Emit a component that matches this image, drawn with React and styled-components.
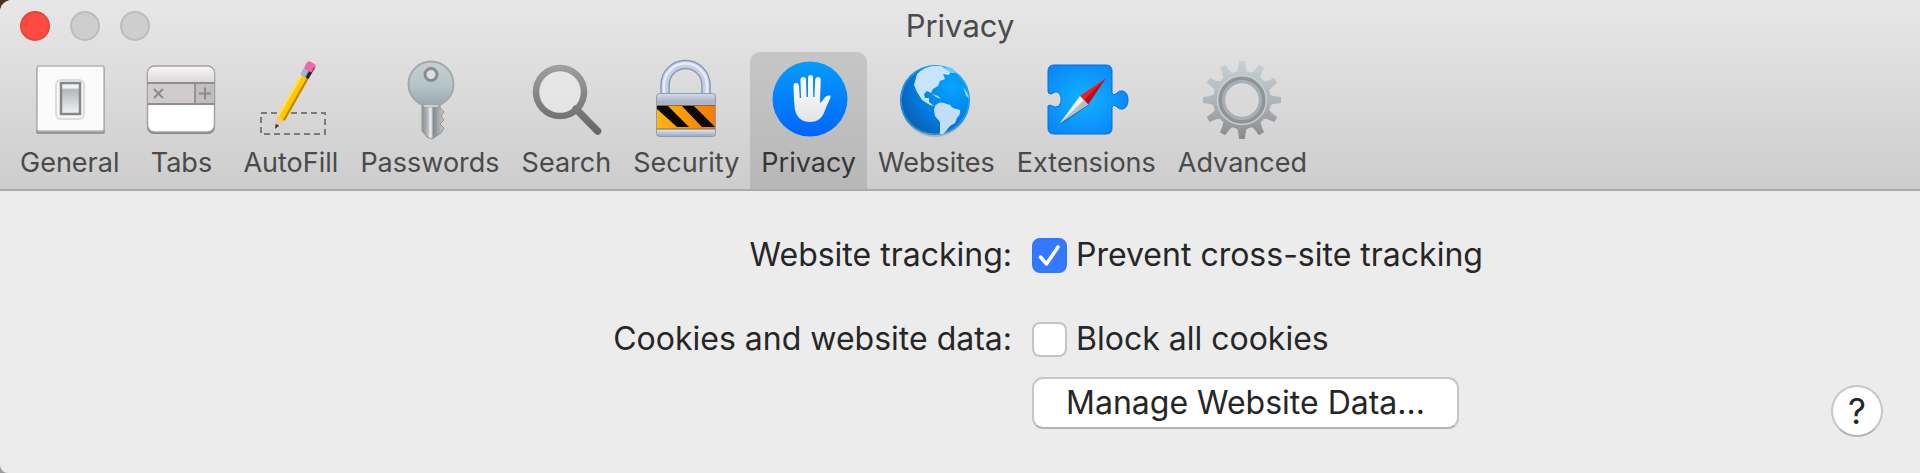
import React, { useState } from "react";
import styled, { createGlobalStyle } from "styled-components";

const GlobalStyle = createGlobalStyle`
  * {
    box-sizing: border-box;
  }
  body {
    margin: 0;
    background: linear-gradient(#4d3128, #9c9c9c);
    font-family: Inter, "Liberation Sans", sans-serif;
  }
`;

const Window = styled.main`
  min-height: 100vh;
  overflow: hidden;
  border-radius: 12px 0 0 8px;
  background-color: #ececec;
  color: #262626;
`;

const Header = styled.header`
  background: linear-gradient(#e7e7e7, #cdcdcd);
  border-bottom: 2px solid #ababab;
`;

const TitleBar = styled.div`
  display: grid;
  grid-template-columns: 1fr auto 1fr;
  align-items: center;
  height: 52px;
  padding: 0 20px;
`;

const TrafficLights = styled.div`
  display: flex;
  gap: 20px;
`;

const Light = styled.button`
  width: 30px;
  height: 30px;
  padding: 0;
  border-radius: 50%;
  border: 2px solid ${({ $active }) => ($active ? "#e9453c" : "#bcbcbc")};
  background-color: ${({ $active }) => ($active ? "#ff4a41" : "#cecece")};
`;

const Title = styled.h1`
  margin: 0;
  font-size: 31px;
  font-weight: 400;
  line-height: 36px;
  color: #4b4b4b;
`;

const Toolbar = styled.nav`
  display: flex;
  padding: 0 9px;
`;

const ToolButton = styled.button`
  display: flex;
  flex-direction: column;
  align-items: center;
  gap: 8px;
  min-width: 98px;
  padding: 8px 11px 11px;
  border: none;
  border-radius: 10px 10px 0 0;
  background: ${({ $active }) =>
    $active ? "linear-gradient(#c6c6c6, #b7b7b7)" : "transparent"};
  color: ${({ $active }) => ($active ? "#353535" : "#4a4a4a")};
  font-family: inherit;
  font-size: 27px;
  line-height: 30px;
`;

const Icon = styled.svg`
  width: 80px;
  height: 80px;
  overflow: visible;
`;

const Content = styled.div`
  display: flex;
  flex-direction: column;
  padding: 44px 37px 34px 0;
`;

const Form = styled.div`
  display: grid;
  grid-template-columns: 1012fr 851fr;
  column-gap: 20px;
  row-gap: 44px;
`;

const RowLabel = styled.div`
  text-align: right;
  font-size: 32px;
  line-height: 40px;
`;

const Field = styled.div`
  display: flex;
  flex-direction: column;
  align-items: flex-start;
  gap: 18px;
`;

const CheckLabel = styled.label`
  display: flex;
  align-items: center;
  gap: 9px;
  font-size: 32px;
  line-height: 40px;
`;

const CheckWrap = styled.span`
  display: grid;
  width: 35px;
  height: 35px;
  & > * {
    grid-area: 1 / 1;
  }
`;

const Checkbox = styled.input`
  appearance: none;
  width: 35px;
  height: 35px;
  margin: 0;
  border: 2px solid #c4c4c4;
  border-radius: 8px;
  background-color: #fff;
  &:checked {
    border-color: #2f78fb;
    background-color: #3478ff;
  }
`;

const CheckMark = styled.svg`
  width: 35px;
  height: 35px;
  pointer-events: none;
`;

const PushButton = styled.button`
  height: 52px;
  padding: 0 32px;
  border: 2px solid #c6c6c6;
  border-bottom-color: #b4b4b4;
  border-radius: 11px;
  background-color: #fff;
  color: #262626;
  font-family: inherit;
  font-size: 32px;
  line-height: 40px;
`;

const FooterRow = styled.div`
  display: flex;
  justify-content: space-between;
  align-items: flex-start;
  min-height: 60px;
`;

const HelpButton = styled.button`
  align-self: flex-end;
  width: 52px;
  height: 52px;
  padding: 0;
  border: 2px solid #c6c6c6;
  border-bottom-color: #b4b4b4;
  border-radius: 50%;
  background-color: #fff;
  color: #262626;
  font-family: inherit;
  font-size: 35px;
  line-height: 40px;
`;

const FieldWithHelp = styled(Field)`
  align-items: stretch;
`;

const GeneralIcon = () => (
  <Icon viewBox="0 0 80 80" aria-hidden="true">
    <defs>
      <linearGradient id="rocker" x1="0" y1="0" x2="0" y2="1">
        <stop offset="0" stopColor="#f0f1f3" />
        <stop offset="0.15" stopColor="#f0f1f3" />
        <stop offset="0.22" stopColor="#b4b7bb" />
        <stop offset="1" stopColor="#f1f3f6" />
      </linearGradient>
    </defs>
    <rect x="6" y="7" width="69" height="67" rx="2" fill="#989898" />
    <rect x="7" y="6" width="67" height="65" rx="2" fill="#fbfbfc" stroke="#b5b5b5" strokeWidth="1.5" />
    <rect x="26" y="20" width="28" height="39" rx="5" fill="#f7f7f8" stroke="#dcdcde" strokeWidth="2" />
    <rect x="31" y="23" width="19" height="31" fill="url(#rocker)" stroke="#85888b" strokeWidth="2.5" />
  </Icon>
);

const TabsIcon = () => (
  <Icon viewBox="0 0 80 80" aria-hidden="true">
    <defs>
      <linearGradient id="tabTop" x1="0" y1="0" x2="0" y2="1">
        <stop offset="0" stopColor="#f7f5f6" />
        <stop offset="1" stopColor="#dcd7da" />
      </linearGradient>
    </defs>
    <rect x="6" y="7" width="68" height="67" rx="7" fill="#858585" />
    <rect x="6.5" y="6" width="67" height="66" rx="7" fill="#fff" stroke="#a2a0a1" strokeWidth="1.5" />
    <path d="M7.5 22.5 V13 Q7.5 7 14 7 H66 Q72.5 7 72.5 13 V22.5 Z" fill="url(#tabTop)" />
    <rect x="7" y="23" width="66" height="21" fill="#d0ccce" />
    <rect x="54" y="23" width="19" height="21" fill="#c2bec0" />
    <path d="M6 23 H74 M6 44 H74 M54 23 V44" stroke="#8f8d8e" strokeWidth="1.8" />
    <path d="M13 29 L22 38 M22 29 L13 38 M58 33.5 H70 M64 27.5 V39.5" stroke="#8c8a8b" strokeWidth="2" />
  </Icon>
);

const AutoFillIcon = () => (
  <Icon viewBox="0 0 80 80" aria-hidden="true">
    <path
      d="M10 53 H74 V74 H10 Z"
      fill="none"
      stroke="#7b7b7b"
      strokeWidth="2"
      strokeDasharray="6 4"
    />
    <g transform="translate(24 69) rotate(29.5)">
      <path d="M0 0 L-4.5 -13 L4.5 -13 Z" fill="#ecc993" />
      <path d="M0 0 L-2 -5 L2 -5 Z" fill="#3d3935" />
      <rect x="-4.5" y="-60" width="9" height="48" fill="#ffc800" />
      <rect x="-4.5" y="-60" width="2" height="48" fill="#ffe366" />
      <rect x="2.3" y="-60" width="2.2" height="48" fill="#c98500" />
      <rect x="-4.5" y="-68" width="9" height="8" fill="#6f7488" />
      <rect x="-4.5" y="-68" width="5" height="8" fill="#9fb7e2" />
      <rect x="1.5" y="-68" width="3" height="8" fill="#242323" />
      <rect x="-5" y="-76" width="10" height="9" rx="3" fill="#ee6aa9" />
      <path d="M4 -73 V-68" stroke="#a83e70" strokeWidth="1.5" />
    </g>
  </Icon>
);

const PasswordsIcon = () => (
  <Icon viewBox="0 0 80 80" aria-hidden="true">
    <defs>
      <linearGradient id="keyHead" x1="0" y1="0" x2="0" y2="1">
        <stop offset="0" stopColor="#c9cfd1" />
        <stop offset="0.55" stopColor="#b4c4c9" />
        <stop offset="1" stopColor="#99a6aa" />
      </linearGradient>
      <linearGradient id="keyShaft" x1="0" y1="0" x2="1" y2="0">
        <stop offset="0" stopColor="#8c9093" />
        <stop offset="0.25" stopColor="#b2b7bb" />
        <stop offset="0.4" stopColor="#f2f4f6" />
        <stop offset="0.52" stopColor="#858a8e" />
        <stop offset="1" stopColor="#c7cbcf" />
      </linearGradient>
    </defs>
    <path
      d="M32 43 H50 V48 L54 52 L51 56 L54 60 L50 64 L54 68 L51 73 L42 79 L37 77 L32 71 Z"
      fill="url(#keyShaft)"
      stroke="#909497"
      strokeWidth="1"
    />
    <circle cx="41" cy="24" r="22.5" fill="url(#keyHead)" stroke="#a2a8aa" strokeWidth="2" />
    <circle cx="41" cy="14.5" r="6" fill="#dedede" stroke="#868c8f" strokeWidth="3" />
    <path d="M34 46 H48" stroke="#d8dee1" strokeWidth="1.5" />
  </Icon>
);

const SearchIcon = () => (
  <Icon viewBox="0 0 80 80" aria-hidden="true">
    <defs>
      <linearGradient id="lens" x1="0" y1="4" x2="0" y2="76" gradientUnits="userSpaceOnUse">
        <stop offset="0" stopColor="#a1a1a1" />
        <stop offset="1" stopColor="#636363" />
      </linearGradient>
    </defs>
    <circle cx="34" cy="32" r="24" fill="#fff" fillOpacity="0.3" stroke="url(#lens)" strokeWidth="6.5" />
    <path d="M50 49 L71.5 71" stroke="url(#lens)" strokeWidth="7.5" strokeLinecap="round" />
  </Icon>
);

const SecurityIcon = () => (
  <Icon viewBox="0 0 80 80" aria-hidden="true">
    <defs>
      <linearGradient id="lockBody" x1="0" y1="0" x2="0" y2="1">
        <stop offset="0" stopColor="#d5dcec" />
        <stop offset="0.2" stopColor="#aab3c6" />
        <stop offset="0.85" stopColor="#dae1f1" />
        <stop offset="1" stopColor="#9aa4b9" />
      </linearGradient>
      <linearGradient id="hazard" x1="0" y1="0" x2="1" y2="0">
        <stop offset="0" stopColor="#ffb613" />
        <stop offset="1" stopColor="#f57a00" />
      </linearGradient>
    </defs>
    <path d="M19 36 V25 A20.5 20.5 0 0 1 60 25 V36" fill="none" stroke="#8791a8" strokeWidth="9.5" />
    <path d="M19 36 V25 A20.5 20.5 0 0 1 60 25 V36" fill="none" stroke="#c4cee6" strokeWidth="7" />
    <path d="M18 36 V25 A21.5 21.5 0 0 1 61 25 V36" fill="none" stroke="#e6edfc" strokeWidth="2.5" />
    <rect x="10.5" y="33.5" width="59" height="43" rx="3" fill="url(#lockBody)" stroke="#8f9ab3" />
    <rect x="11" y="45" width="58" height="24" fill="url(#hazard)" />
    <path d="M11 46 H22 L43 67 H31 L11 49 Z M36 46 H48 L69 67 H56 Z" fill="#0b0a08" />
    <path d="M11 45.5 H69 M11 69 H69" stroke="#8a6a3a" strokeWidth="1" />
  </Icon>
);

const PrivacyIcon = () => (
  <Icon viewBox="0 0 80 80" aria-hidden="true">
    <defs>
      <linearGradient id="handDisc" x1="0" y1="0" x2="0" y2="1">
        <stop offset="0" stopColor="#049cfd" />
        <stop offset="1" stopColor="#0065fb" />
      </linearGradient>
      <linearGradient id="hand" x1="0" y1="0" x2="0" y2="1">
        <stop offset="0" stopColor="#ffffff" />
        <stop offset="1" stopColor="#e3e3e6" />
      </linearGradient>
    </defs>
    <circle cx="41" cy="39" r="37.5" fill="url(#handDisc)" />
    <path
      d="M24.5 26 Q24.5 23 27 23 Q29.8 23 30 26 L30.8 38 H32 L31.5 20 Q31.5 17 34.3 17 Q37 17 37 20 L37.6 37 H39 V18 Q39 15 41.5 15 Q44 15 44 18 L44.2 37 H45.4 L46.2 20 Q46.5 17 49.2 17 Q51.8 17 51.7 20 L51 43 Q53 42 55 38.5 Q57 35 61.5 35.5 Q62 37.5 60 41 Q57 47 55 53 Q51 62 41 62 Q29 62 26 50 Q25 44 24.5 26 Z"
      fill="url(#hand)"
    />
  </Icon>
);

const WebsitesIcon = () => (
  <Icon viewBox="0 0 80 80" aria-hidden="true">
    <defs>
      <radialGradient id="ocean" cx="0.75" cy="0.3" r="0.85">
        <stop offset="0" stopColor="#08a4fc" />
        <stop offset="0.5" stopColor="#0084ea" />
        <stop offset="1" stopColor="#0b5cae" />
      </radialGradient>
    </defs>
    <ellipse cx="39" cy="43" rx="34" ry="34" fill="#000" fillOpacity="0.16" />
    <circle cx="39" cy="40" r="35" fill="url(#ocean)" />
    <circle cx="39" cy="40" r="34" fill="none" stroke="#31b8f5" strokeOpacity="0.6" strokeWidth="1.5" />
    <path
      d="M21 14 Q28 7 37 6 L45 6 L50 9 L55 11 L53 15 L47 14 L49 19 L44 21 L42 26 L37 29 L35 33 L31 31 L28 34 L29 38 L33 38 L33 42 L38 46 L34 45 L26 40 L21 32 L18 25 Z"
      fill="#c6e4fa"
    />
    <path d="M49 6 L56 8 L60 13 L55 13 L51 10 Z" fill="#66cdf8" />
    <path d="M36 34 L42 36 L45 39 L40 37 Z" fill="#b5dcf8" />
    <path
      d="M39 46 Q43 41 48 43 L54 45 L57 48 L64 50 Q65 54 61 58 L59 63 L54 66 L50 71 L47 74 L44 74 L44 62 L39 56 L38 50 Z"
      fill="#c2def6"
    />
    <path d="M67 27 L71 32 L73 38 L70 36 Z" fill="#8bd6f8" />
  </Icon>
);

const ExtensionsIcon = () => (
  <Icon viewBox="0 0 80 80" aria-hidden="true">
    <defs>
      <radialGradient id="puzzle" cx="0.45" cy="0.5" r="0.6">
        <stop offset="0" stopColor="#10b4ff" />
        <stop offset="1" stopColor="#0a86fb" />
      </radialGradient>
    </defs>
    <path
      d="M8 5 H60 Q66 5 66 11 V33 Q67 36 70 34 Q73 30 77 31 Q82 33 82 40 Q82 47 77 49 Q73 50 70 46 Q67 44 66 47 V68 Q66 74 60 74 H8 Q2 74 2 68 V46 Q4 44 6 46 Q10 48 13 46 Q16 42 15 37 Q13 31 9 32 L5 34 Q2 34 2 31 V11 Q2 5 8 5 Z"
      fill="url(#puzzle)"
      stroke="#076bdc"
      strokeWidth="1"
    />
    <path d="M15 65 L34 37 L43 45 Z" fill="#0567b4" fillOpacity="0.5" />
    <path d="M60 18 L34 36 L42 44.5 Z" fill="#f01d25" />
    <path d="M60 18 L38 40 L42 44.5 Z" fill="#b90d18" />
    <path d="M14 63 L34 36 L42 44.5 Z" fill="#f2f2f2" />
    <path d="M14 63 L38 40 L42 44.5 Z" fill="#b9bec2" />
  </Icon>
);

const TEETH = Array.from({ length: 12 }, (_, i) => i * 30);

const AdvancedIcon = () => (
  <Icon viewBox="0 0 80 80" aria-hidden="true">
    <defs>
      <linearGradient id="gear" x1="0" y1="0" x2="0" y2="80" gradientUnits="userSpaceOnUse">
        <stop offset="0" stopColor="#c6d2d7" />
        <stop offset="0.5" stopColor="#b0b6ba" />
        <stop offset="1" stopColor="#88898c" />
      </linearGradient>
      <mask id="gearMask">
        <circle cx="40" cy="40" r="29" fill="#fff" />
        {TEETH.map((angle) => (
          <path
            key={angle}
            d="M33 14 Q36 11 36.5 6 L37 1 H43 L43.5 6 Q44 11 47 14 Z"
            fill="#fff"
            transform={`rotate(${angle} 40 40)`}
          />
        ))}
        <circle cx="40" cy="40" r="16" fill="#000" />
      </mask>
    </defs>
    <g mask="url(#gearMask)">
      <rect width="80" height="80" fill="url(#gear)" />
      <circle cx="40" cy="40" r="21.5" fill="none" stroke="#8f9497" strokeWidth="4" />
      <circle cx="40" cy="40" r="18" fill="none" stroke="#a9afb2" strokeWidth="4" />
      <circle cx="40" cy="40" r="24.5" fill="none" stroke="#c6ccd0" strokeWidth="1.5" />
    </g>
    <circle cx="40" cy="40" r="16" fill="none" stroke="#dadedf" strokeWidth="1.5" />
  </Icon>
);

const TOOLS = [
  { name: "General", Glyph: GeneralIcon },
  { name: "Tabs", Glyph: TabsIcon },
  { name: "AutoFill", Glyph: AutoFillIcon },
  { name: "Passwords", Glyph: PasswordsIcon },
  { name: "Search", Glyph: SearchIcon },
  { name: "Security", Glyph: SecurityIcon },
  { name: "Privacy", Glyph: PrivacyIcon },
  { name: "Websites", Glyph: WebsitesIcon },
  { name: "Extensions", Glyph: ExtensionsIcon },
  { name: "Advanced", Glyph: AdvancedIcon },
];

const CheckOption = ({ children, checked, onChange }) => (
  <CheckLabel>
    <CheckWrap>
      <Checkbox
        type="checkbox"
        checked={checked}
        onChange={(e) => onChange(e.target.checked)}
      />
      {checked && (
        <CheckMark viewBox="0 0 35 35" aria-hidden="true">
          <path
            d="M8.5 19 L14.5 26 L26 9"
            fill="none"
            stroke="#fff"
            strokeWidth="3.5"
            strokeLinecap="round"
            strokeLinejoin="round"
          />
        </CheckMark>
      )}
    </CheckWrap>
    {children}
  </CheckLabel>
);

const App = () => {
  const [activeTool, setActiveTool] = useState("Privacy");
  const [preventTracking, setPreventTracking] = useState(true);
  const [blockCookies, setBlockCookies] = useState(false);

  return (
    <>
      <GlobalStyle />
      <Window>
        <Header>
          <TitleBar>
            <TrafficLights>
              <Light $active aria-label="Close" />
              <Light disabled aria-label="Minimize" />
              <Light disabled aria-label="Zoom" />
            </TrafficLights>
            <Title>{activeTool}</Title>
          </TitleBar>
          <Toolbar>
            {TOOLS.map(({ name, Glyph }) => (
              <ToolButton
                key={name}
                $active={name === activeTool}
                onClick={() => setActiveTool(name)}
              >
                <Glyph />
                {name}
              </ToolButton>
            ))}
          </Toolbar>
        </Header>
        <Content>
          <Form>
            <RowLabel>Website tracking:</RowLabel>
            <Field>
              <CheckOption
                checked={preventTracking}
                onChange={setPreventTracking}
              >
                Prevent cross-site tracking
              </CheckOption>
            </Field>
            <RowLabel>Cookies and website data:</RowLabel>
            <FieldWithHelp>
              <CheckOption checked={blockCookies} onChange={setBlockCookies}>
                Block all cookies
              </CheckOption>
              <FooterRow>
                <PushButton>Manage Website Data...</PushButton>
                <HelpButton aria-label="Help">?</HelpButton>
              </FooterRow>
            </FieldWithHelp>
          </Form>
        </Content>
      </Window>
    </>
  );
};

export default App;
